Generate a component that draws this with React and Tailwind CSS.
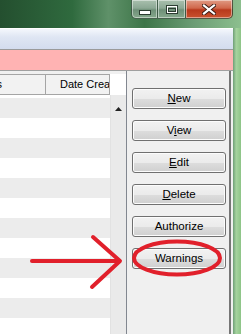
import React from "react";

const font = { fontFamily: '"Liberation Sans", Arial, sans-serif' };

function WinBtn({ children, className }) {
  return (
    <div
      className={
        "h-[19px] border border-t-0 border-[#2f4a36]/80 flex items-center justify-center shadow-[inset_0_0_0_1px_rgba(255,255,255,0.45)] " +
        className
      }
    >
      {children}
    </div>
  );
}

function Btn({ children }) {
  return (
    <div className="w-[94px] h-[21px] rounded-[3px] border border-[#707070] bg-[linear-gradient(#f2f2f2_0%,#ebebeb_50%,#dddddd_51%,#cfcfcf_100%)] shadow-[inset_0_0_0_1px_#fcfcfc] flex items-center justify-center text-[11.5px] text-black leading-none">
      {children}
    </div>
  );
}

export default function App() {
  const rows = Array.from({ length: 12 });
  return (
    <div
      className="relative w-[241px] h-[334px] overflow-hidden flex flex-col bg-[linear-gradient(90deg,#244f2f_0%,#2f6a3e_30%,#5f9169_45%,#3d7548_60%,#6b9c74_80%,#8cbf8e_100%)]"
      style={font}
    >
      {/* title bar */}
      <div className="h-[28px] shrink-0 flex justify-end pr-[8px]">
        <div className="flex h-[19px]">
          <WinBtn className="w-[27px] rounded-bl-[5px] bg-[linear-gradient(#a9c0ae_0%,#8ca894_45%,#6f9078_55%,#86a88c_100%)]">
            <svg width="12" height="5" viewBox="0 0 12 5" className="mt-[6px]">
              <rect x="0.5" y="0.5" width="11" height="4" fill="#fff" stroke="#2c3d32" />
            </svg>
          </WinBtn>
          <WinBtn className="w-[28px] border-l-0 bg-[linear-gradient(#a9c0ae_0%,#8ca894_45%,#6f9078_55%,#86a88c_100%)]">
            <svg width="12" height="9" viewBox="0 0 12 9">
              <rect x="0.5" y="0.5" width="11" height="8" fill="none" stroke="#2c3d32" />
              <rect x="1.5" y="1.5" width="9" height="6" fill="none" stroke="#fff" />
              <rect x="2.5" y="3.5" width="7" height="3" fill="none" stroke="#2c3d32" />
            </svg>
          </WinBtn>
          <WinBtn className="w-[47px] border-l-0 rounded-br-[5px] bg-[linear-gradient(#e09a84_0%,#d0674b_45%,#b8391c_55%,#c9522e_100%)]">
            <svg width="14" height="11" viewBox="0 0 14 11">
              <path d="M2 1.5 L12 9.5 M12 1.5 L2 9.5" stroke="#3a1a12" strokeWidth="4" strokeLinecap="square" />
              <path d="M2 1.5 L12 9.5 M12 1.5 L2 9.5" stroke="#fff" strokeWidth="2.2" strokeLinecap="square" />
            </svg>
          </WinBtn>
        </div>
      </div>

      {/* window body */}
      <div className="flex flex-1 min-h-0">
        <div className="w-[233px] flex flex-col bg-white">
          <div className="h-[1px] bg-white shrink-0" />
          <div className="h-[20px] shrink-0 bg-[linear-gradient(#f4f7fc,#dfe6f3_40%,#d3dcee)]" />
          <div className="h-[1px] bg-[#9a9a9a] shrink-0" />
          <div className="h-[20px] shrink-0 bg-[#ffb3b3]" />
          <div className="h-[1px] bg-[#a0a0a0] shrink-0" />
          <div className="flex flex-1 min-h-0 bg-[#f0f0f0] pr-[2px]">
            {/* list */}
            <div className="w-[127px] pt-[3px] flex flex-col border-r border-[#828790]">
              <div className="flex flex-1 flex-col bg-white">
                <div className="h-[21px] shrink-0 flex text-[11px] text-black">
                  <div className="w-[46px] border-t border-r border-b border-[#a5a5a5] bg-[#f2f2f2] flex items-center justify-end pr-[43px] overflow-hidden">
                    <span>s</span>
                  </div>
                  <div className="w-[64px] border border-l-0 border-[#a5a5a5] bg-[#f2f2f2] overflow-hidden flex items-center pl-[14px] whitespace-nowrap">
                    Date Created
                  </div>
                  <div className="flex-1 bg-white" />
                </div>
                <div className="flex flex-1 min-h-0">
                  <div className="w-[110px] flex flex-col pt-[3px] overflow-hidden">
                    {rows.map((_, i) => (
                      <div key={i} className={"h-[20px] shrink-0 " + (i % 2 === 0 ? "bg-[#ececec]" : "bg-white")} />
                    ))}
                  </div>
                  <div className="flex-1 bg-[#eaeaea] border-l border-[#e2e2e2] flex flex-col items-center">
                    <div className="h-[17px] w-full flex items-end justify-center pb-[1px] bg-[#eaeaea]">
                      <svg width="7" height="4" viewBox="0 0 7 4">
                        <path d="M0 4 L3.5 0 L7 4 Z" fill="#222" />
                      </svg>
                    </div>
                  </div>
                </div>
              </div>
            </div>
            {/* buttons */}
            <div className="flex-1 flex flex-col gap-[11px] pt-[17px] pl-[5px] border-r-2 border-[#767676]">
              <Btn><span><u className="underline-offset-1">N</u>ew</span></Btn>
              <Btn><span>V<u className="underline-offset-1">i</u>ew</span></Btn>
              <Btn><span><u className="underline-offset-1">E</u>dit</span></Btn>
              <Btn><span><u className="underline-offset-1">D</u>elete</span></Btn>
              <Btn><span>Authorize</span></Btn>
              <Btn><span>Warnings</span></Btn>
            </div>
          </div>
        </div>
        <div className="flex-1 bg-[linear-gradient(90deg,#6e9e77,#a6d39f_40%,#8dc487)]" />
      </div>

      {/* red annotation overlay */}
      <svg className="absolute left-0 top-0 pointer-events-none" width="241" height="334" viewBox="0 0 241 334">
        <g stroke="#e1202b" strokeWidth="4" strokeLinecap="round" strokeLinejoin="round" fill="none">
          <path d="M32 261 H119" />
          <path d="M93 237 L120 261 L92 287" />
          <ellipse cx="177" cy="258" rx="43" ry="16.5" />
        </g>
      </svg>
    </div>
  );
}
